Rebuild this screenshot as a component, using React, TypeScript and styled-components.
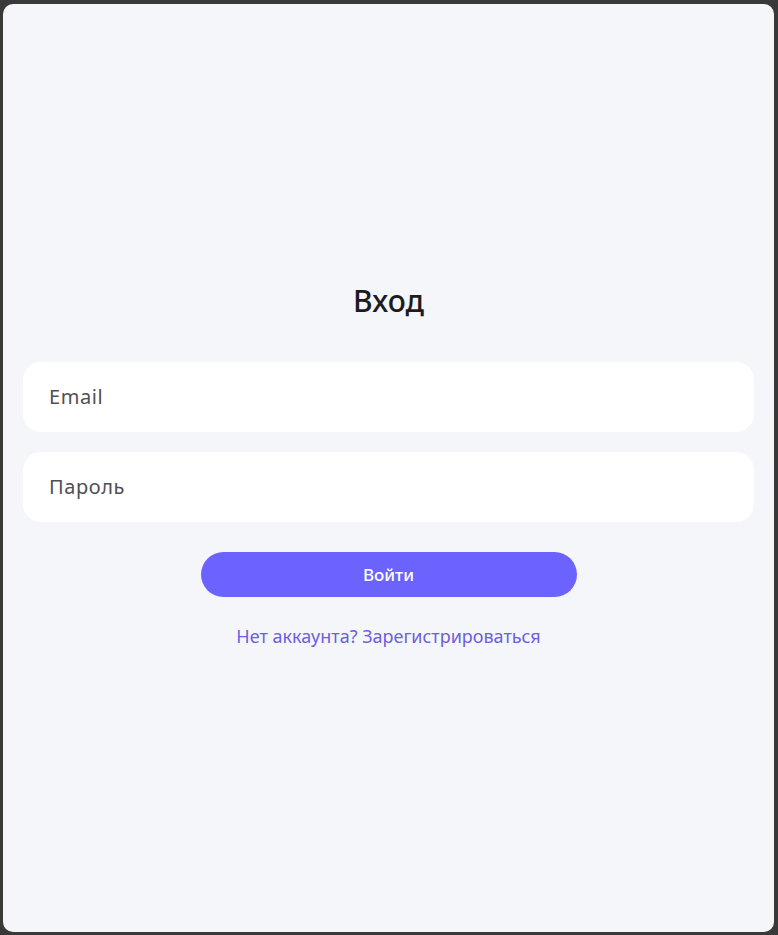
import * as React from 'react';
import styled, { createGlobalStyle } from 'styled-components';

const GlobalStyle = createGlobalStyle`
  html, body {
    margin: 0;
    padding: 0;
    height: 100%;
    background: #393939;
  }
  #root {
    height: 100%;
  }
`;

const Frame = styled.div`
  box-sizing: border-box;
  height: 100vh;
  padding: 4px 4px 3px 3px;
`;

const Panel = styled.main`
  box-sizing: border-box;
  height: 100%;
  background: #f5f6fa;
  border-radius: 10px;
  display: flex;
  flex-direction: column;
  justify-content: center;
  padding: 0 20px 9px 20px;
  font-family: 'Noto Sans', 'Open Sans', sans-serif;
`;

const Title = styled.h1`
  margin: 0 0 41px;
  text-align: center;
  font-size: 30px;
  font-weight: 500;
  color: #1c1c1e;
`;

const Form = styled.form`
  display: flex;
  flex-direction: column;
  gap: 20px;
`;

const Input = styled.input`
  box-sizing: border-box;
  height: 70px;
  width: 100%;
  border: none;
  outline: none;
  border-radius: 18px;
  background: #ffffff;
  padding: 0 26px;
  font-family: inherit;
  font-size: 20px;
  letter-spacing: 0.6px;
  color: #333;

  &::placeholder {
    color: #505052;
  }
`;

const Button = styled.button`
  align-self: center;
  width: 376px;
  height: 45px;
  margin-top: 10px;
  border: none;
  border-radius: 23px;
  background: #6c63ff;
  color: #ffffff;
  font-family: inherit;
  font-size: 17px;
  font-weight: 500;
  cursor: pointer;
`;

const Footer = styled.p`
  margin: 27px 0 0;
  text-align: center;
  font-size: 18px;
  color: #6c5fe0;
`;

export default function App() {
  return (
    <>
      <GlobalStyle />
      <Frame>
        <Panel>
          <Title>Вход</Title>
          <Form onSubmit={e => e.preventDefault()}>
            <Input type='email' placeholder='Email' />
            <Input type='password' placeholder='Пароль' />
            <Button type='submit'>Войти</Button>
          </Form>
          <Footer>Нет аккаунта? Зарегистрироваться</Footer>
        </Panel>
      </Frame>
    </>
  );
}
